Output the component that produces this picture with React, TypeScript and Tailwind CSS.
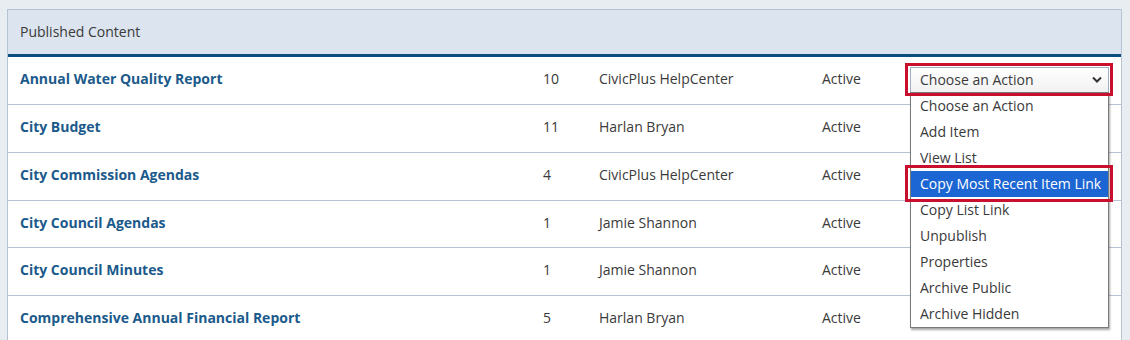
import React from "react";

const rows = [
  { name: "Annual Water Quality Report", n: "10", who: "CivicPlus HelpCenter", st: "Active" },
  { name: "City Budget", n: "11", who: "Harlan Bryan", st: "Active" },
  { name: "City Commission Agendas", n: "4", who: "CivicPlus HelpCenter", st: "Active" },
  { name: "City Council Agendas", n: "1", who: "Jamie Shannon", st: "Active" },
  { name: "City Council Minutes", n: "1", who: "Jamie Shannon", st: "Active" },
  { name: "Comprehensive Annual Financial Report", n: "5", who: "Harlan Bryan", st: "Active" },
];

const options = [
  "Choose an Action",
  "Add Item",
  "View List",
  "Copy Most Recent Item Link",
  "Copy List Link",
  "Unpublish",
  "Properties",
  "Archive Public",
  "Archive Hidden",
];

export default function App() {
  return (
    <div
      className="relative w-[1130px] h-[340px] overflow-hidden bg-[#e8edf2] pt-[9px] pl-[7px] text-[14px] text-[#3a3a3a]"
      style={{ fontFamily: "'Open Sans', 'Noto Sans', sans-serif" }}
    >
      <div className="w-[1115px] border border-[#b6c3d2] bg-white">
        <div className="h-[47px] bg-[#dbe4ef] border-b-[3px] border-[#0b4e80] flex items-center pl-[12px] pb-[2px]">
          Published Content
        </div>
        {rows.map((r, i) => (
          <div
            key={i}
            className={
              "border-b border-[#b6c3d2] flex items-center pb-[4px] " +
              (i === 3 ? "h-[47px]" : "h-[48px]")
            }
          >
            <div className="w-[535px] pl-[12px] font-bold text-[#1b5a8b]">{r.name}</div>
            <div className="w-[56px]">{r.n}</div>
            <div className="w-[223px]">{r.who}</div>
            <div className="w-[88px]">{r.st}</div>
            <div className="w-[199px]">
              {i === 0 && (
                <div className="h-[26px] mt-[2px] border border-[#9fb0c2] bg-gradient-to-b from-white to-[#f1f1f1] flex items-center justify-between pl-[9px] pr-[6px]">
                  <span className="-mt-[1px]">Choose an Action</span>
                  <svg width="10" height="7" viewBox="0 0 10 7">
                    <path d="M1 1.5 L5 5.5 L9 1.5" stroke="#333" strokeWidth="2" fill="none" />
                  </svg>
                </div>
              )}
            </div>
          </div>
        ))}
      </div>

      <div className="absolute left-[910px] top-[92px] w-[199px] bg-white border border-[#7a7a7a] shadow-[1px_2px_2px_rgba(0,0,0,0.35)]">
        {options.map((o, i) => (
          <div
            key={o}
            className={
              "h-[26px] flex items-center pl-[9px] pb-[2px] " +
              (i === 3 ? "bg-[#1b66d2] text-white" : "")
            }
          >
            {o}
          </div>
        ))}
      </div>

      <div className="absolute left-[905px] top-[63px] w-[208px] h-[33px] border-[3px] border-[#c8102e] pointer-events-none" />
      <div className="absolute left-[905px] top-[165px] w-[208px] h-[37px] border-[3px] border-[#c8102e] pointer-events-none" />
    </div>
  );
}
